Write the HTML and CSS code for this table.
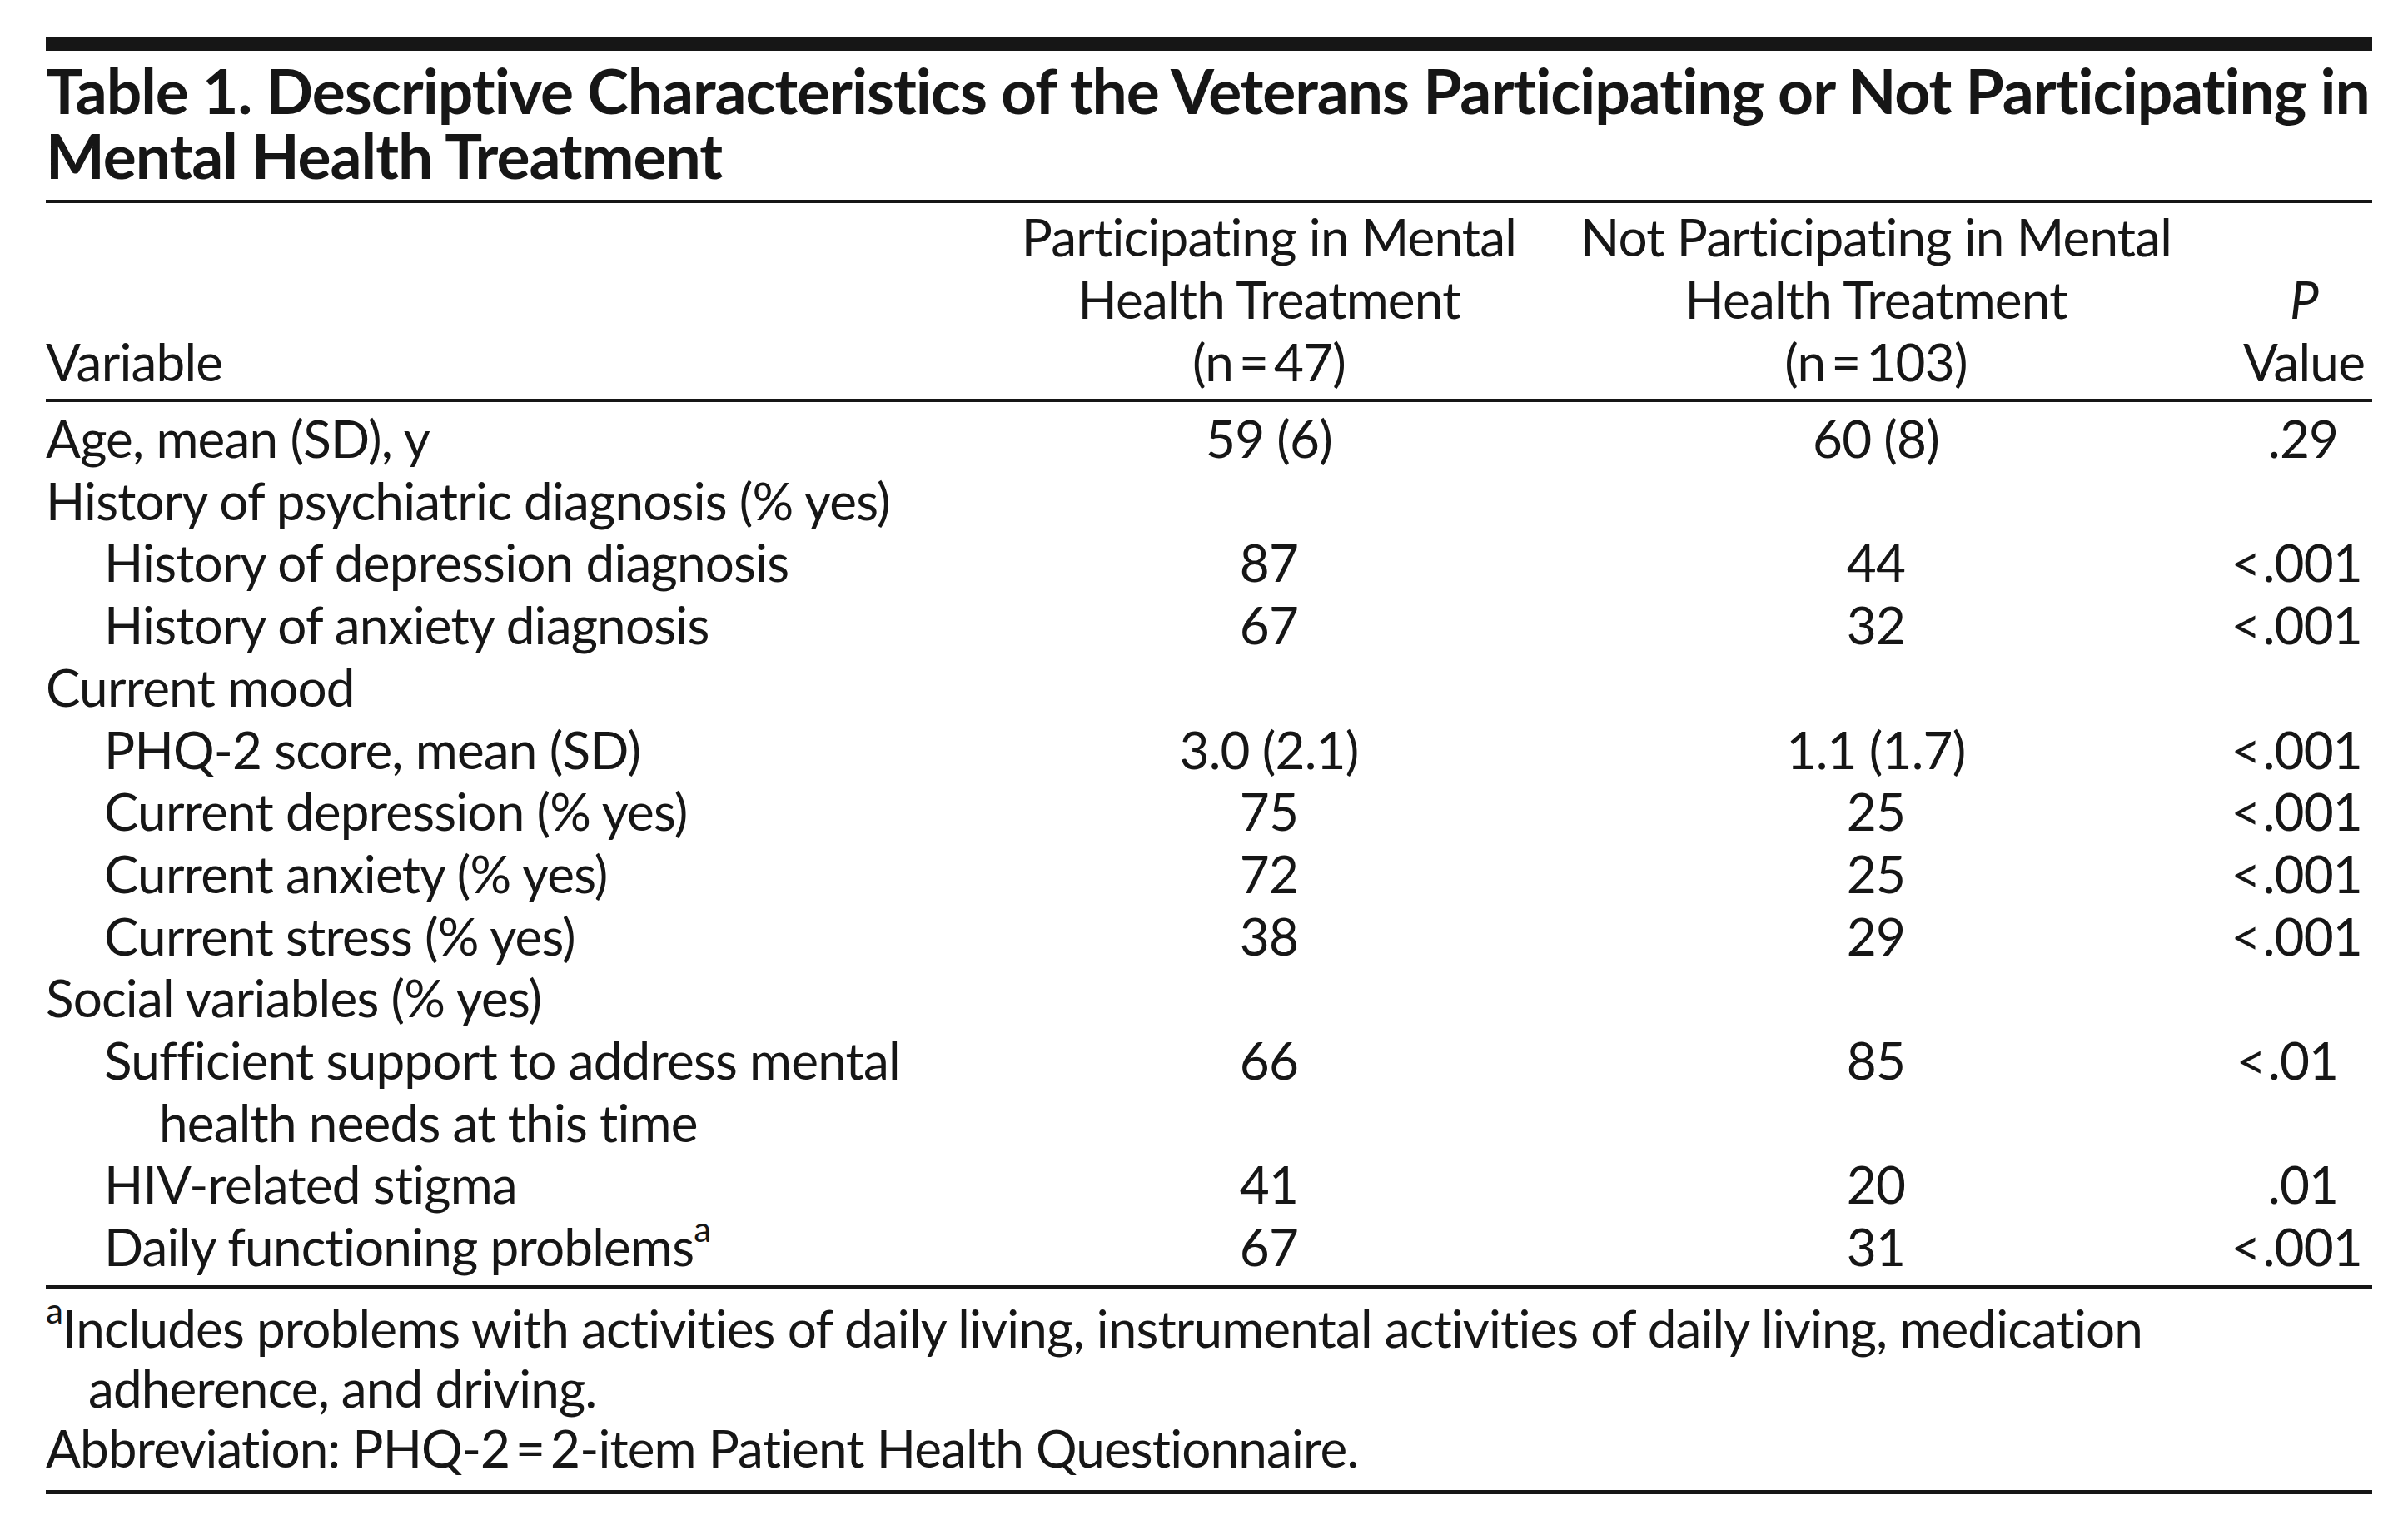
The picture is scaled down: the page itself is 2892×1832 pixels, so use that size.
FILE: index.html
```html
<!DOCTYPE html>
<html lang="en">
<head>
<meta charset="utf-8">
<title>Table 1</title>
<link rel="stylesheet" href="styles.css">
</head>
<body>
<div class="page">
  <div class="topbar"></div>
  <h1 class="title">Table 1. Descriptive Characteristics of the Veterans Participating or Not Participating in<br>Mental Health Treatment</h1>
  <table class="tbl">
    <colgroup>
      <col class="c1"><col class="c2"><col class="c3"><col class="c4">
    </colgroup>
    <thead>
      <tr>
        <th class="h-var">Variable</th>
        <th class="h-num">Participating in Mental<br>Health Treatment<br>(n&#8201;=&#8201;47)</th>
        <th class="h-num">Not Participating in Mental<br>Health Treatment<br>(n&#8201;=&#8201;103)</th>
        <th class="h-p"><i>P</i><br>Value</th>
      </tr>
    </thead>
    <tbody>
      <tr class="first"><td>Age, mean (SD), y</td><td class="num">59 (6)</td><td class="num">60 (8)</td><td class="pv p2">.29</td></tr>
      <tr><td>History of psychiatric diagnosis (% yes)</td><td></td><td></td><td></td></tr>
      <tr><td class="sub">History of depression diagnosis</td><td class="num">87</td><td class="num">44</td><td class="pv">&lt;&#8202;.001</td></tr>
      <tr><td class="sub">History of anxiety diagnosis</td><td class="num">67</td><td class="num">32</td><td class="pv">&lt;&#8202;.001</td></tr>
      <tr><td>Current mood</td><td></td><td></td><td></td></tr>
      <tr><td class="sub">PHQ-2 score, mean (SD)</td><td class="num">3.0 (2.1)</td><td class="num">1.1 (1.7)</td><td class="pv">&lt;&#8202;.001</td></tr>
      <tr><td class="sub">Current depression (% yes)</td><td class="num">75</td><td class="num">25</td><td class="pv">&lt;&#8202;.001</td></tr>
      <tr><td class="sub">Current anxiety (% yes)</td><td class="num">72</td><td class="num">25</td><td class="pv">&lt;&#8202;.001</td></tr>
      <tr><td class="sub">Current stress (% yes)</td><td class="num">38</td><td class="num">29</td><td class="pv">&lt;&#8202;.001</td></tr>
      <tr><td>Social variables (% yes)</td><td></td><td></td><td></td></tr>
      <tr><td class="sub hang">Sufficient support to address mental<br>health needs at this time</td><td class="num">66</td><td class="num">85</td><td class="pv p2">&lt;&#8202;.01</td></tr>
      <tr><td class="sub">HIV-related stigma</td><td class="num">41</td><td class="num">20</td><td class="pv p2">.01</td></tr>
      <tr class="last"><td class="sub">Daily functioning problems<sup>a</sup></td><td class="num">67</td><td class="num">31</td><td class="pv">&lt;&#8202;.001</td></tr>
    </tbody>
  </table>
  <div class="notes">
    <p class="note hang-note"><sup>a</sup>Includes problems with activities of daily living, instrumental activities of daily living, medication<br>adherence, and driving.</p>
    <p class="note">Abbreviation: PHQ-2&#8201;=&#8201;2-item Patient Health Questionnaire.</p>
  </div>
</div>
</body>
</html>
```

FILE: styles.css
```css
html, body {
  margin: 0;
  padding: 0;
  background: #ffffff;
}

body {
  font-family: "Lato", "Open Sans", "Liberation Sans", sans-serif;
  font-variant-ligatures: none;
  font-feature-settings: "liga" 0, "dlig" 0;
  letter-spacing: -0.8px;
  color: #161616;
}

.page {
  width: 2794px;
  margin-left: 55px;
  padding-top: 44px;
}

.topbar {
  height: 17px;
  background: #161616;
}

.title {
  margin: 8px 0 0 0;
  padding-bottom: 15px;
  font-size: 75px;
  line-height: 78px;
  font-weight: 700;
  letter-spacing: -1.05px;
  white-space: nowrap;
  border-bottom: 4px solid #161616;
}

.tbl {
  width: 2794px;
  border-collapse: collapse;
  table-layout: fixed;
  font-size: 62px;
}

.c1 { width: 1145px; }
.c2 { width: 648px; }
.c3 { width: 810px; }
.c4 { width: 191px; }

.tbl thead th {
  font-weight: 400;
  line-height: 75px;
  padding: 3px 0 7px 0;
  vertical-align: bottom;
  border-bottom: 4px solid #161616;
  white-space: nowrap;
}

.h-var { text-align: left; }
.h-num { text-align: center; }
.h-p {
  text-align: center;
  padding-left: 27px !important;
}

.tbl td {
  padding: 0;
  line-height: 74.7px;
  vertical-align: top;
  white-space: nowrap;
}

.tbl tr.first td { padding-top: 6px; }
.tbl tr.last td { padding-bottom: 9px; }
.tbl tbody { border-bottom: 5px solid #161616; }

.sub { padding-left: 70px !important; }
.hang {
  padding-left: 136px !important;
  text-indent: -66px;
}

.num { text-align: center; }

.pv {
  text-align: right;
  padding-right: 12px !important;
}
.pv.p2 { padding-right: calc(12px + 0.8ch) !important; }

sup {
  font-size: 0.68em;
  line-height: 0;
  vertical-align: 0.68em;
}

.notes {
  padding: 10px 0 15px 0;
  border-bottom: 5px solid #161616;
  font-size: 62px;
  letter-spacing: -0.85px;
}

.note {
  margin: 0;
  line-height: 72px;
  white-space: nowrap;
}

.hang-note {
  padding-left: 51px;
  text-indent: -51px;
}
```
